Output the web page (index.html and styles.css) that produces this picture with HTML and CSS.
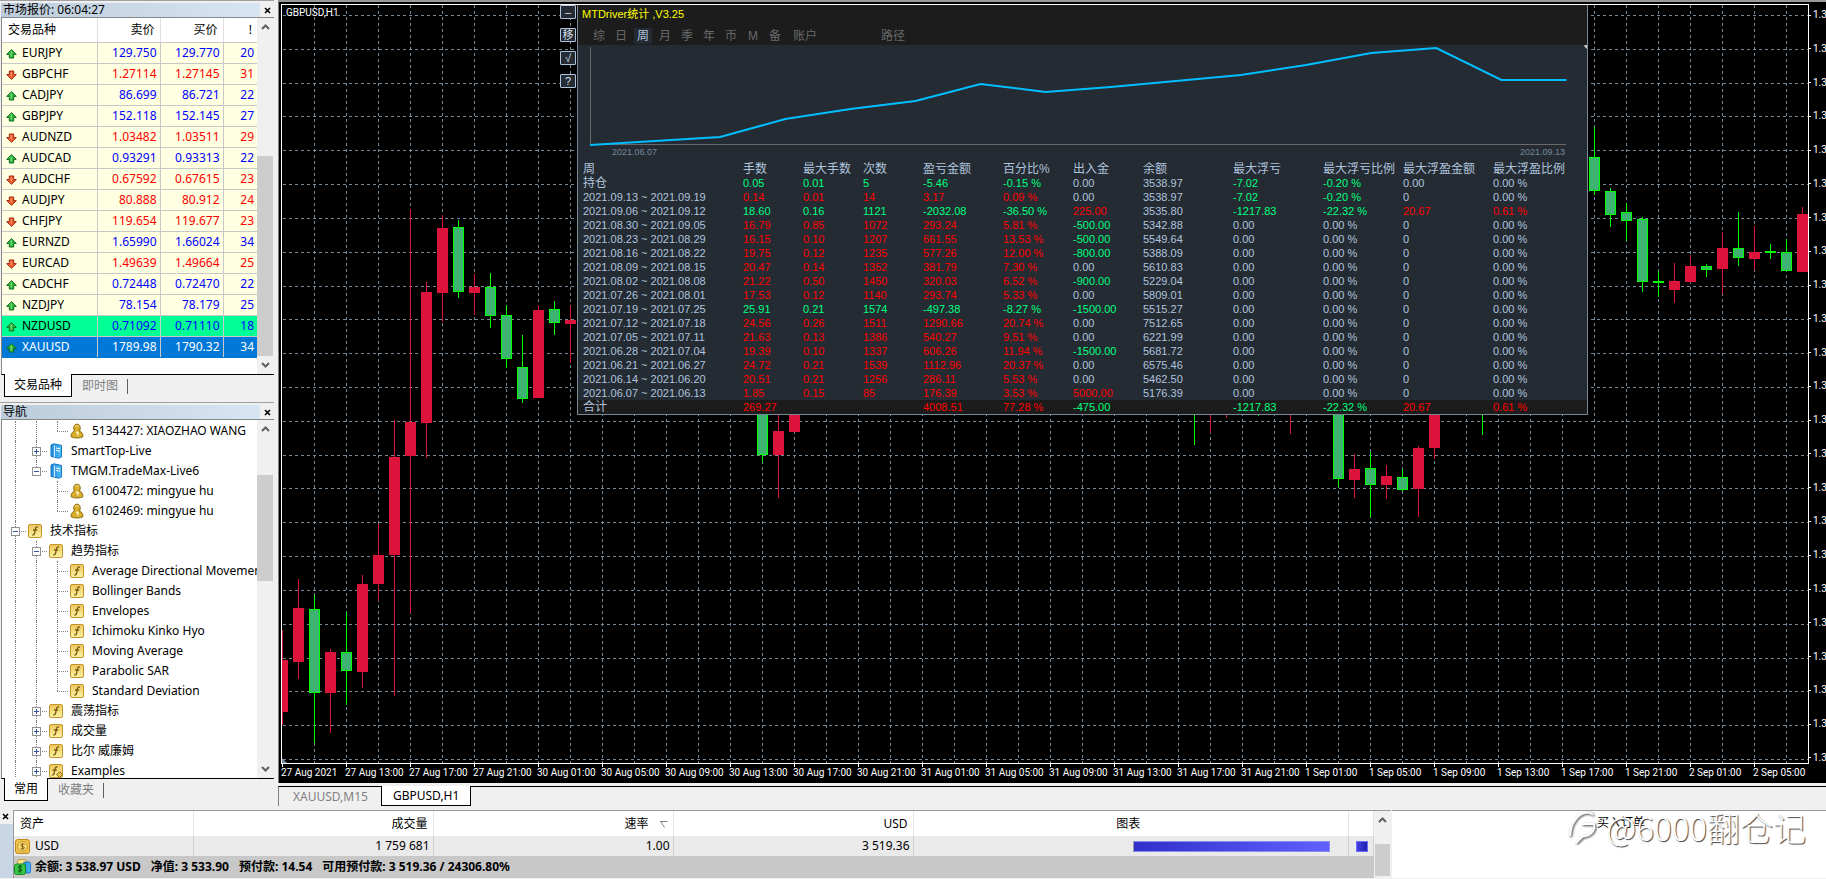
FILE: index.html
```html
<!DOCTYPE html>
<html lang="zh">
<head>
  <meta charset="UTF-8">
  <title>GBPUSD,H1</title>
  <link rel="stylesheet" href="styles.css">
</head>
<body>
  <svg class="sprite" aria-hidden="true">
    <defs>
      <linearGradient id="gold" x1="0" y1="0" x2="0" y2="1">
        <stop offset="0" stop-color="#ecc75a"/><stop offset="1" stop-color="#fdf3a6"/>
      </linearGradient>
      <linearGradient id="blue" x1="0" y1="0" x2="1" y2="0">
        <stop offset="0" stop-color="#1c86d8"/><stop offset="1" stop-color="#4fc0f8"/>
      </linearGradient>
    </defs>
    <symbol id="i-up" viewBox="0 0 11 10">
      <path d="M5.5 .7 10.3 5.4H7.7V9H3.3V5.4H.7Z" fill="#2fb53c" stroke="#10701c"/>
      <path d="M5.2 2.4V7.6" stroke="#8be88f"/>
    </symbol>
    <symbol id="i-down" viewBox="0 0 11 10">
      <path d="M5.5 9.3 .7 4.6H3.3V1H7.7V4.6H10.3Z" fill="#ee5a2c" stroke="#a32a0c"/>
      <path d="M5.2 2V6.6" stroke="#ffab80"/>
    </symbol>
    <symbol id="i-func" viewBox="0 0 14 14">
      <rect x=".5" y=".5" width="13" height="13" rx="1.5" fill="url(#gold)" stroke="#c4922a"/>
      <path d="M10 3.2C8.4 2.6 7.7 3.4 7.4 5L6.6 9C6.3 10.6 5.6 11.3 4.2 10.8M5 6H9.2" fill="none" stroke="#7c5a12" stroke-width="1.3"/>
    </symbol>
    <symbol id="i-custom" viewBox="0 0 14 14">
      <rect x=".5" y=".5" width="13" height="13" rx="1.5" fill="url(#gold)" stroke="#c4922a"/>
      <path d="M8.6 3.2C7 2.6 6.3 3.4 6 5L5.2 9C4.9 10.6 4.2 11.3 2.8 10.8M3.6 6H7.8" fill="none" stroke="#7c5a12" stroke-width="1.3"/>
      <path d="M10.6 7.6 13.6 10.6 10.6 13.6 7.6 10.6Z" fill="#e8c44c" stroke="#8c6a1c"/>
    </symbol>
    <symbol id="i-server" viewBox="0 0 14 16">
      <path d="M2 2 5 .8 12.5 2.4V14L9.6 15.2 2 13.4Z" fill="url(#blue)" stroke="#1a78c2"/>
      <path d="M5.4 2.4V14.2" stroke="#e6f6ff"/>
      <path d="M7 5 11 5.8M7 7.4 11 8.2" stroke="#fff"/>
    </symbol>
    <symbol id="i-user" viewBox="0 0 14 16">
      <path d="M1 13.6C1 10.6 2.6 8.6 4.6 8 2.8 5.4 3.6 1.2 7 1.2S11 5.4 9.4 8C11.6 8.8 13 10.8 13 13.6 11 15.4 3 15.4 1 13.6Z" fill="#d8ae2a" stroke="#8c6a10"/>
      <path d="M5.6 8.6 8.4 13.4 8.8 8.8Z" fill="#fff6c8"/>
      <path d="M5 3.4C6 2.6 8 2.6 9 3.6" fill="none" stroke="#f6e08a"/>
    </symbol>
    <symbol id="i-coin" viewBox="0 0 15 15">
      <rect x=".5" y=".5" width="14" height="14" rx="2.5" fill="#efc04a" stroke="#c08a1c"/>
      <circle cx="7.5" cy="7.5" r="4.8" fill="#f8dc78" stroke="#b98a22" stroke-width=".8"/>
      <path d="M9.6 5.6C8.6 4.6 5.8 4.8 5.8 6.3S9.4 7.2 9.4 8.8 6.4 10.4 5.4 9.3M7.5 4V11" fill="none" stroke="#85600e"/>
    </symbol>
    <symbol id="i-money" viewBox="0 0 17 16">
      <rect x="3.5" y=".6" width="9" height="6" rx="2" fill="#f8e48c" stroke="#c29c28"/>
      <rect x="9.5" y="3" width="7" height="11" rx="1.5" fill="url(#blue)" stroke="#1a78c2"/>
      <rect x=".5" y="5" width="11" height="10.4" rx="2" fill="#3cc648" stroke="#0f8a20"/>
      <path d="M8 7.6C7 6.8 4.4 6.8 4.4 8.4S7.8 9.4 7.8 11 5 12.6 3.8 11.6M6 6V13.8" fill="none" stroke="#064d10"/>
    </symbol>
    <symbol id="i-chev-up" viewBox="0 0 9 6"><path d="M1 5 4.5 1.5 8 5" fill="none" stroke="#606060" stroke-width="2"/></symbol>
    <symbol id="i-chev-down" viewBox="0 0 9 6"><path d="M1 1 4.5 4.5 8 1" fill="none" stroke="#606060" stroke-width="2"/></symbol>
    <symbol id="i-close" viewBox="0 0 7 7"><path d="M1 1 6 6M6 1 1 6" stroke="#000" stroke-width="1.6"/></symbol>
  </svg>

  <div class="app">
    <div class="workspace">
      <aside class="docks">
        <section class="dock market">
          <header class="dock-title">
            <h2>市场报价: 06:04:27</h2>
            <button class="close" aria-label="关闭市场报价"><svg><use href="#i-close"/></svg></button>
          </header>
          <div class="dock-body">
            <table class="quotes">
              <colgroup><col class="c-symbol"><col class="c-price"><col class="c-price"><col></colgroup>
              <thead><tr><th>交易品种</th><th>卖价</th><th>买价</th><th>!</th></tr></thead>
              <tbody id="quotes"></tbody>
            </table>
            <div class="scroll">
              <svg><use href="#i-chev-up"/></svg>
              <div class="track track-market"><i></i></div>
              <svg><use href="#i-chev-down"/></svg>
            </div>
          </div>
          <div class="tabs">
            <button class="tab active">交易品种</button>
            <button class="tab">即时图</button>
          </div>
        </section>

        <section class="dock navigator">
          <header class="dock-title">
            <h2>导航</h2>
            <button class="close" aria-label="关闭导航"><svg><use href="#i-close"/></svg></button>
          </header>
          <div class="dock-body">
            <ul class="tree" id="tree"></ul>
            <div class="scroll">
              <svg><use href="#i-chev-up"/></svg>
              <div class="track track-tree"><i></i></div>
              <svg><use href="#i-chev-down"/></svg>
            </div>
          </div>
          <div class="tabs">
            <button class="tab active">常用</button>
            <button class="tab">收藏夹</button>
          </div>
        </section>
      </aside>

      <main class="charts">
        <div class="chart">
          <div class="plot">
            <svg id="candles" class="candles"></svg>
            <div class="symbol-name">GBPUSD,H1</div>
            <div class="driver">
              <div class="tools">
                <button>–</button><button>移</button><button>√</button><button>?</button>
              </div>
              <div class="stats">
                <header>
                  <h1>MTDriver统计 ,V3.25</h1>
                  <nav>
                    <button>综</button><button>日</button><button class="on">周</button><button>月</button><button>季</button><button>年</button><button>币</button><button>M</button><button>备</button><button class="wide">账户</button><button class="path">路径</button>
                  </nav>
                </header>
                <div class="equity">
                  <svg id="equity" viewBox="0 0 1009 101"></svg>
                  <div class="range"><span>2021.06.07</span><span>2021.09.13</span></div>
                </div>
                <table>
                  <colgroup>
                    <col class="w160"><col class="w60"><col class="w60"><col class="w60"><col class="w80"><col class="w70">
                    <col class="w70"><col class="w90"><col class="w90"><col class="w80"><col class="w90"><col>
                  </colgroup>
                  <thead>
                    <tr><th>周</th><th>手数</th><th>最大手数</th><th>次数</th><th>盈亏金额</th><th>百分比%</th><th>出入金</th><th>余额</th><th>最大浮亏</th><th>最大浮亏比例</th><th>最大浮盈金额</th><th>最大浮盈比例</th></tr>
                  </thead>
                  <tbody id="weeks"></tbody>
                  <tfoot>
                    <tr><td class="total">合计</td><td class="r">269.27</td><td></td><td></td><td class="r">4008.51</td><td class="r">77.28 %</td><td class="g">-475.00</td><td></td><td class="g">-1217.83</td><td class="g">-22.32 %</td><td class="r">20.67</td><td class="r">0.61 %</td></tr>
                  </tfoot>
                </table>
              </div>
            </div>
          </div>
          <div class="prices" id="prices"></div>
          <div class="times" id="times"></div>
        </div>
        <div class="tabs chart-tabs">
          <button class="tab">XAUUSD,M15</button>
          <button class="tab active">GBPUSD,H1</button>
        </div>
      </main>
    </div>

    <section class="terminal">
      <div class="grip"><button class="close" aria-label="关闭终端"><svg><use href="#i-close"/></svg></button></div>
      <div class="exposure">
        <table>
          <colgroup><col class="e-asset"><col class="e-num"><col class="e-num"><col class="e-num"><col><col class="e-key"></colgroup>
          <thead>
            <tr><th>资产</th><th>成交量</th><th class="sorted">速率 <svg viewBox="0 0 8 7"><path d="M0 .5H7.5M1 1 4.5 6.5" fill="none" stroke="#808080"/></svg></th><th>USD</th><th>图表</th><th></th></tr>
          </thead>
          <tbody>
            <tr><td><svg><use href="#i-coin"/></svg>USD</td><td>1 759 681</td><td>1.00</td><td>3 519.36</td><td><div class="bar"></div></td><td><div class="key"></div></td></tr>
          </tbody>
        </table>
        <div class="summary">
          <svg><use href="#i-money"/></svg>
          <span>余额: 3 538.97 USD</span><span>净值: 3 533.90</span><span>预付款: 14.54</span><span>可用预付款: 3 519.36 / 24306.80%</span>
        </div>
      </div>
      <div class="scroll">
        <svg><use href="#i-chev-up"/></svg>
        <div class="track track-exposure"><i></i></div>
      </div>
      <div class="orders">
        <span>买入订单</span>
        <div class="watermark">
          <svg viewBox="0 0 38 34">
            <path d="M2 26C3 17 4 14 8 9C13 2 22 1 25 5M14 14H26C28 22 20 27 15 26L8 33" />
          </svg>
          @6000翻仓记
        </div>
      </div>
    </section>
  </div>
  <script src="script.js"></script>
</body>
</html>
```

FILE: styles.css
```css
* {
  box-sizing: border-box;
}
body {
  margin: 0;
  overflow: hidden;
  background: #f0f0f0;
  color: #000;
  font: 12px/20px "Noto Sans", "Noto Sans CJK SC", sans-serif;
}
button {
  margin: 0;
  padding: 0;
  border: 0;
  background: none;
  color: inherit;
  font: inherit;
}
table {
  border-collapse: collapse;
  table-layout: fixed;
  width: 100%;
}
th {
  font-weight: normal;
}
th, td {
  padding: 0;
  white-space: nowrap;
}
ul {
  margin: 0;
  padding: 0;
  list-style: none;
}
.sprite {
  position: absolute;
  width: 0;
  height: 0;
}
.app {
  display: grid;
  grid-template-rows: minmax(0, 1fr) auto;
  height: 100vh;
}
.workspace {
  display: grid;
  grid-template-columns: 278px minmax(0, 1fr);
  min-height: 0;
}

/* docked panels */
.docks {
  display: flex;
  flex-direction: column;
  min-height: 0;
  padding-right: 4px;
}
.dock {
  display: flex;
  flex-direction: column;
  border-top: 1px solid #a0a0a0;
  padding-top: 2px;
}
.market {
  height: 402px;
}
.navigator {
  flex: 1;
  min-height: 0;
}
.dock-title {
  display: flex;
  height: 14px;
  padding-left: 1px;
}
.dock-title h2 {
  flex: 1;
  margin: 0;
  padding-left: 2px;
  font-size: 12px;
  line-height: 14px;
  font-weight: normal;
  background: linear-gradient(90deg, #bccbda, #d8e5f3);
}
.close {
  display: flex;
  width: 14px;
  align-items: center;
  justify-content: center;
}
.close svg {
  width: 7px;
  height: 7px;
}
.dock-body {
  display: flex;
  flex: 1;
  min-height: 0;
  margin-left: 1px;
  border-top: 1px solid #888;
  border-left: 1px solid #888;
  border-bottom: 1px solid #000;
  background: #fff;
  overflow: hidden;
}
.scroll {
  display: flex;
  flex-direction: column;
  flex: none;
  width: 17px;
  align-items: center;
  background: #f0f0f0;
}
.scroll svg {
  flex: none;
  width: 9px;
  height: 6px;
  margin: 6px 0;
}
.track {
  flex: 1;
  align-self: stretch;
  padding-right: 1px;
}
.track i {
  display: block;
  height: 100%;
  background: #cdcdcd;
}
.track-market {
  padding-top: 120px;
}
.track-tree i {
  height: 106px;
}
.track-tree {
  padding-top: 37px;
}

.quotes {
  align-self: flex-start;
  flex: 1;
  width: auto;
  min-width: 0;
  line-height: 16px;
}
.c-symbol {
  width: 95px;
}
.c-price {
  width: 63px;
}
.quotes th {
  height: 24px;
  padding-right: 5px;
  border-right: 1px solid #e0e0e0;
  border-bottom: 1px solid #c8c8c8;
  text-align: right;
}
.quotes th:first-child {
  padding-left: 6px;
  text-align: left;
}
.quotes td {
  height: 21px;
  padding-right: 3px;
  border-right: 1px solid #c8c8c8;
  border-bottom: 1px solid #c8c8c8;
  background: #ffffe1;
  color: #00f;
  text-align: right;
}
.quotes td:first-child {
  padding-left: 4px;
  color: #000;
  text-align: left;
}
.quotes td:last-child, .quotes th:last-child {
  border-right: 0;
}
.quotes td svg {
  width: 11px;
  height: 10px;
  margin-right: 5px;
  vertical-align: -2px;
}
.quotes .down td + td {
  color: #f00;
}
.quotes .green td {
  background: #00ff94;
}
.quotes .selected td, .quotes .selected td:first-child {
  background: #0078d7;
  border-bottom-color: #0078d7;
  color: #fff;
}

.tabs {
  display: flex;
  height: 27px;
  padding-left: 4px;
  flex: none;
}
.tab {
  position: relative;
  height: 21px;
  padding: 0 10px;
  color: #808080;
  line-height: 20px;
}
.tab.active {
  top: -1px;
  height: 23px;
  padding: 0 9px;
  border: 1px solid #000;
  border-top: 0;
  background: #fff;
  color: #000;
}
.docks .tab:not(.active)::after {
  content: "";
  position: absolute;
  right: 0;
  top: 4px;
  height: 15px;
  border-right: 1px solid #606060;
}

.tree {
  flex: 1;
  min-width: 0;
  padding: 1px 0 0 3px;
  overflow: hidden;
  font-size: 12px;
}
.tree li {
  display: flex;
  align-items: center;
  height: 20px;
  white-space: nowrap;
}
.tree li svg {
  flex: none;
  width: 14px;
  height: 16px;
  margin: 0 8px 0 2px;
}
.guide {
  position: relative;
  flex: none;
  width: 21px;
  height: 20px;
}
.line::before, .tee::before, .elbow::before {
  content: "";
  position: absolute;
  left: 10px;
  top: 0;
  height: 20px;
  border-left: 1px dotted #808080;
}
.elbow::before {
  height: 10px;
}
.tee::after, .elbow::after {
  content: "";
  position: absolute;
  left: 10px;
  top: 10px;
  width: 11px;
  border-top: 1px dotted #808080;
}
.toggle {
  position: absolute;
  z-index: 1;
  left: 6px;
  top: 6px;
  width: 9px;
  height: 9px;
  border: 1px solid #909090;
  background: linear-gradient(#3454a0, #3454a0) 1px 3px / 5px 1px no-repeat #fff;
}
.toggle.plus::after {
  content: "";
  position: absolute;
  left: 3px;
  top: 1px;
  height: 5px;
  border-left: 1px solid #3454a0;
}

/* chart window */
.charts {
  display: flex;
  flex-direction: column;
  min-width: 0;
  min-height: 0;
}
.chart {
  display: grid;
  grid-template-columns: minmax(0, 1fr) 17px;
  grid-template-rows: minmax(0, 1fr) 19px;
  flex: 1;
  min-height: 0;
  padding: 2px 0 0 2px;
  border-top: 2px solid #999;
  border-left: 1px solid #808080;
  background: #000;
  color: #fff;
  font-family: Roboto, "Noto Sans CJK SC", sans-serif;
  font-size: 10px;
}
.plot {
  position: relative;
  border: 1px solid #fff;
  overflow: hidden;
}
.candles {
  display: block;
  width: 100%;
  height: 100%;
}
.symbol-name {
  position: absolute;
  left: 4px;
  top: 1px;
  font-size: 10px;
  line-height: 14px;
}
.prices {
  display: flex;
  flex-direction: column;
  justify-content: space-between;
  padding-top: 5px;
  line-height: 12px;
}
.prices span {
  display: flex;
  align-items: center;
  gap: 2px;
}
.prices span::before {
  content: "";
  flex: none;
  width: 2px;
  height: 1px;
  background: #fff;
}
.times {
  grid-column: 1 / -1;
  display: flex;
  line-height: 18px;
}
.times span {
  position: relative;
  flex: none;
  width: 64px;
  white-space: nowrap;
}
.times span::before {
  content: "";
  position: absolute;
  left: 1px;
  top: 0;
  height: 3px;
  border-left: 1px solid #fff;
}
.chart-tabs {
  height: 20px;
  margin-top: 3px;
  border-top: 1px solid #000;
  border-left: 1px solid #808080;
}
.chart-tabs .tab {
  height: 19px;
  padding: 0 13px 0 10px;
  line-height: 18px;
}
.chart-tabs .tab.active {
  height: 20px;
  padding: 0 11px;
}

/* statistics overlay */
.driver {
  position: absolute;
  left: 278px;
  top: 0;
  display: flex;
  gap: 1px;
  font-family: "Liberation Sans", "Noto Sans CJK SC", sans-serif;
}
.tools {
  display: flex;
  flex-direction: column;
  gap: 9px;
}
.tools button {
  width: 16px;
  height: 14px;
  border: 1px solid #b0c4de;
  border-radius: 1px;
  background: #242b33;
  color: #d8e0ea;
  font-size: 11px;
  line-height: 11px;
}
.stats {
  width: 1011px;
  border: 1px solid #778899;
  border-top: 0;
  background: #242b33;
  color: #b0c4de;
  font-size: 11px;
}
.stats header {
  height: 40px;
  padding-top: 2px;
  background: #1c1c1c;
}
.stats h1 {
  margin: 0 0 7px 4px;
  color: #ff0;
  font-size: 11px;
  font-weight: normal;
  line-height: 14px;
}
.stats nav {
  display: flex;
  gap: 4px;
  padding-left: 12px;
}
.stats nav button {
  width: 18px;
  height: 16px;
  border-radius: 2px;
  color: #696969;
  font-size: 12px;
  line-height: 16px;
}
.stats nav .on {
  background: #242b33;
  color: #b0c4de;
}
.stats nav .wide {
  width: 34px;
}
.stats nav .path {
  width: 34px;
  margin-left: 50px;
}
.equity svg {
  display: block;
  width: 100%;
}
.range {
  display: flex;
  justify-content: space-between;
  padding: 0 22px 0 34px;
  color: #778899;
  font-size: 9px;
  line-height: 12px;
}
.stats table {
  margin-top: 4px;
  line-height: 14px;
}
.stats th, .stats td {
  height: 14px;
  text-align: left;
}
.stats th, .stats .total {
  font-size: 12px;
}
.stats th:first-child, .stats td:first-child {
  padding-left: 5px;
}
.stats tfoot {
  background: #1c1c1c;
}
.w60 { width: 60px; }
.w70 { width: 70px; }
.w80 { width: 80px; }
.w90 { width: 90px; }
.w160 { width: 165px; }
.r { color: #f00; }
.g { color: #00ff7f; }

/* terminal */
.terminal {
  display: grid;
  grid-template-columns: 13px minmax(0, 1361px) 18px minmax(200px, 1fr);
  margin-top: 4px;
  padding-bottom: 1px;
}
.grip {
  padding-top: 2px;
  background: linear-gradient(#f0f0f0 14px, #c8d6e6 14px);
}
.grip .close {
  width: 11px;
  height: 8px;
}
.exposure, .terminal .scroll, .orders {
  border-top: 1px solid #999;
}
.exposure {
  border-left: 1px solid #999;
  background: #fff;
}
.e-asset { width: 179px; }
.e-num { width: 240px; }
.e-key { width: 25px; }
.exposure th, .exposure td {
  border-right: 1px solid #d0d0d0;
  text-align: right;
}
.exposure th {
  height: 25px;
  padding-right: 5px;
  border-color: #e4e4e4;
}
.exposure td {
  height: 20px;
  padding-right: 3px;
  background: #eaeaea;
}
.exposure th:first-child, .exposure td:first-child {
  text-align: left;
}
.exposure th:first-child {
  padding-left: 6px;
}
.exposure td:first-child {
  padding-left: 1px;
}
.exposure th:nth-child(5) {
  text-align: center;
}
.sorted svg {
  width: 8px;
  height: 7px;
  margin-left: 8px;
}
.exposure td svg {
  width: 15px;
  height: 15px;
  margin-right: 5px;
  vertical-align: -4px;
}
.exposure td:nth-child(5) {
  padding: 0 18px 0 219px;
}
.bar {
  height: 11px;
  border: 1px solid #8c8cf0;
  border-left-color: #a0a0a0;
  background: linear-gradient(90deg, #3030c8, #6060ff);
}
.exposure td:last-child {
  padding: 0 5px 0 7px;
}
.key {
  height: 11px;
  border: 1px solid #6c6cf8;
  background: linear-gradient(90deg, #4040e0, #2020b0);
}
.summary {
  display: flex;
  align-items: center;
  gap: 10px;
  height: 22px;
  background: #c8c8c8;
  font-weight: bold;
  white-space: nowrap;
}
.summary svg {
  width: 17px;
  height: 16px;
  margin-right: -6px;
}
.track-exposure {
  padding: 15px 1px 2px;
}
.orders {
  position: relative;
  background: #fff;
  line-height: 24px;
  text-align: center;
}
.orders > span {
  margin-right: -24px;
}
.watermark {
  position: absolute;
  right: 20px;
  top: -4px;
  display: flex;
  align-items: center;
  color: #fff;
  font: 33px/40px "Noto Sans CJK SC", sans-serif;
  font-weight: 300;
  text-shadow: 1px 1px 1px #444;
}
.watermark svg {
  width: 38px;
  height: 34px;
  fill: none;
  stroke: #fff;
  stroke-width: 2;
  filter: drop-shadow(1px 1px 1px #333);
}
```

FILE: script.js
```javascript
const quotes = [
  ["EURJPY", "129.750", "129.770", 20, "up"],
  ["GBPCHF", "1.27114", "1.27145", 31, "down"],
  ["CADJPY", "86.699", "86.721", 22, "up"],
  ["GBPJPY", "152.118", "152.145", 27, "up"],
  ["AUDNZD", "1.03482", "1.03511", 29, "down"],
  ["AUDCAD", "0.93291", "0.93313", 22, "up"],
  ["AUDCHF", "0.67592", "0.67615", 23, "down"],
  ["AUDJPY", "80.888", "80.912", 24, "down"],
  ["CHFJPY", "119.654", "119.677", 23, "down"],
  ["EURNZD", "1.65990", "1.66024", 34, "up"],
  ["EURCAD", "1.49639", "1.49664", 25, "down"],
  ["CADCHF", "0.72448", "0.72470", 22, "up"],
  ["NZDJPY", "78.154", "78.179", 25, "up"],
  ["NZDUSD", "0.71092", "0.71110", 18, "up", "green"],
  ["XAUUSD", "1789.98", "1790.32", 34, "up", "selected"]
];
document.getElementById("quotes").innerHTML = quotes.map(([name, bid, ask, spread, dir, mark]) =>
  `<tr class="${dir} ${mark || ""}"><td><svg><use href="#i-${dir}"/></svg>${name}</td><td>${bid}</td><td>${ask}</td><td>${spread}</td></tr>`
).join("");

// guides: | line, t tee, l elbow, + - toggles, _ toggle on the last branch, blank
const tree = [
  ["||l", "user", "5134427: XIAOZHAO WANG"],
  ["|+", "server", "SmartTop-Live"],
  ["|_", "server", "TMGM.TradeMax-Live6"],
  ["| t", "user", "6100472: mingyue hu"],
  ["| l", "user", "6102469: mingyue hu"],
  ["-", "func", "技术指标"],
  ["|-", "func", "趋势指标"],
  ["||t", "func", "Average Directional Movement Index"],
  ["||t", "func", "Bollinger Bands"],
  ["||t", "func", "Envelopes"],
  ["||t", "func", "Ichimoku Kinko Hyo"],
  ["||t", "func", "Moving Average"],
  ["||t", "func", "Parabolic SAR"],
  ["||l", "func", "Standard Deviation"],
  ["|+", "func", "震荡指标"],
  ["|+", "func", "成交量"],
  ["|+", "func", "比尔 威廉姆"],
  ["|+", "custom", "Examples"]
];
const guides = {
  "|": '<span class="guide line"></span>',
  "t": '<span class="guide tee"></span>',
  "l": '<span class="guide elbow"></span>',
  " ": '<span class="guide"></span>',
  "+": '<span class="guide tee"><i class="toggle plus"></i></span>',
  "-": '<span class="guide tee"><i class="toggle"></i></span>',
  "_": '<span class="guide elbow"><i class="toggle"></i></span>'
};
document.getElementById("tree").innerHTML = tree.map(([g, icon, text]) =>
  `<li>${[...g].map(c => guides[c]).join("")}<svg><use href="#i-${icon}"/></svg>${text}</li>`
).join("");

const weeks = [
  "持仓|0.05|0.01|5|-5.46|-0.15 %|0.00|3538.97|-7.02|-0.20 %|0.00|0.00 %",
  "2021.09.13 ~ 2021.09.19|0.14|0.01|14|3.17|0.09 %|0.00|3538.97|-7.02|-0.20 %|0|0.00 %",
  "2021.09.06 ~ 2021.09.12|18.60|0.16|1121|-2032.08|-36.50 %|225.00|3535.80|-1217.83|-22.32 %|20.67|0.61 %",
  "2021.08.30 ~ 2021.09.05|16.79|0.85|1072|293.24|5.81 %|-500.00|5342.88|0.00|0.00 %|0|0.00 %",
  "2021.08.23 ~ 2021.08.29|16.15|0.10|1207|661.55|13.53 %|-500.00|5549.64|0.00|0.00 %|0|0.00 %",
  "2021.08.16 ~ 2021.08.22|19.75|0.12|1235|577.26|12.00 %|-800.00|5388.09|0.00|0.00 %|0|0.00 %",
  "2021.08.09 ~ 2021.08.15|20.47|0.14|1352|381.79|7.30 %|0.00|5610.83|0.00|0.00 %|0|0.00 %",
  "2021.08.02 ~ 2021.08.08|21.22|0.50|1450|320.03|6.52 %|-900.00|5229.04|0.00|0.00 %|0|0.00 %",
  "2021.07.26 ~ 2021.08.01|17.53|0.12|1140|293.74|5.33 %|0.00|5809.01|0.00|0.00 %|0|0.00 %",
  "2021.07.19 ~ 2021.07.25|25.91|0.21|1574|-497.38|-8.27 %|-1500.00|5515.27|0.00|0.00 %|0|0.00 %",
  "2021.07.12 ~ 2021.07.18|24.56|0.26|1511|1290.66|20.74 %|0.00|7512.65|0.00|0.00 %|0|0.00 %",
  "2021.07.05 ~ 2021.07.11|21.63|0.13|1386|540.27|9.51 %|0.00|6221.99|0.00|0.00 %|0|0.00 %",
  "2021.06.28 ~ 2021.07.04|19.39|0.10|1337|606.26|11.94 %|-1500.00|5681.72|0.00|0.00 %|0|0.00 %",
  "2021.06.21 ~ 2021.06.27|24.72|0.21|1539|1112.96|20.37 %|0.00|6575.46|0.00|0.00 %|0|0.00 %",
  "2021.06.14 ~ 2021.06.20|20.51|0.21|1256|286.11|5.53 %|0.00|5462.50|0.00|0.00 %|0|0.00 %",
  "2021.06.07 ~ 2021.06.13|1.85|0.15|85|176.39|3.53 %|5000.00|5176.39|0.00|0.00 %|0|0.00 %"
];
const sign = v => parseFloat(v) < 0 ? "g" : parseFloat(v) > 0 ? "r" : "";
document.getElementById("weeks").innerHTML = weeks.map(row => {
  const cells = row.split("|");
  return "<tr>" + cells.map((v, i) => {
    let cls = "";
    if (i === 0) cls = v === "持仓" ? "total" : "";
    else if (i <= 5) cls = sign(cells[4]);
    else if (i !== 7) cls = sign(v);
    return `<td class="${cls}">${v}</td>`;
  }).join("") + "</tr>";
}).join("");

// equity curve
const equity = [100, 96, 92, 74, 64, 56, 39, 47, 42, 36, 30, 20, 8, 3, 35, 35];
const points = equity.map((y, i) => `${12 + i * 65.1},${y}`).join(" ");
document.getElementById("equity").innerHTML =
  `<path d="M12.5 2V99.5H988" fill="none" stroke="#696969"/>
   <polyline points="${points}" fill="none" stroke="#00bfff" stroke-width="2"/>
   <path d="M1009 -3V4L1006 1Z" fill="#ccc"/>`;

// candles: bar index, high, body top, body bottom, low, r = up / g = down
const bars = [
  [0, 630, 660, 712, 725, "r"], [1, 579, 608, 662, 679, "r"], [2, 595, 609, 693, 743, "g"],
  [3, 649, 652, 693, 733, "r"], [4, 612, 652, 671, 705, "g"], [5, 575, 584, 672, 688, "r"],
  [6, 524, 555, 584, 601, "r"], [7, 420, 457, 555, 696, "r"], [8, 209, 422, 456, 613, "r"],
  [9, 282, 292, 423, 458, "r"], [10, 215, 228, 293, 322, "r"], [11, 220, 227, 292, 298, "g"],
  [12, 274, 287, 293, 315, "r"], [13, 273, 287, 316, 328, "g"], [14, 305, 315, 359, 368, "g"],
  [15, 335, 367, 399, 403, "g"], [16, 305, 310, 398, 398, "r"], [17, 301, 309, 323, 335, "g"],
  [18, 306, 320, 324, 363, "r"], [30, 400, 400, 455, 462, "g"], [31, 400, 431, 455, 498, "r"],
  [32, 400, 400, 432, 432, "r"], [57, 400, 400, 400, 445, "g"], [58, 400, 400, 400, 433, "r"],
  [59, 400, 400, 400, 418, "r"], [61, 400, 400, 400, 416, "g"], [63, 400, 400, 400, 434, "r"],
  [66, 400, 400, 479, 487, "g"], [67, 454, 469, 480, 498, "r"], [68, 452, 468, 485, 517, "g"],
  [69, 465, 476, 485, 499, "r"], [70, 469, 477, 490, 492, "g"], [71, 446, 448, 489, 517, "r"],
  [72, 400, 400, 448, 459, "r"], [75, 400, 400, 400, 435, "g"], [82, 127, 157, 191, 195, "g"],
  [83, 188, 191, 215, 227, "g"], [84, 203, 212, 221, 241, "g"], [85, 217, 219, 282, 292, "g"],
  [86, 271, 281, 283, 297, "g"], [87, 263, 281, 290, 303, "r"], [88, 255, 266, 282, 283, "r"],
  [89, 264, 266, 270, 277, "g"], [90, 232, 248, 269, 294, "r"], [91, 212, 248, 258, 266, "g"],
  [92, 226, 252, 259, 270, "r"], [93, 244, 251, 253, 259, "g"], [94, 239, 252, 271, 271, "g"],
  [95, 207, 214, 272, 272, "r"]
];
const TOP = 5;
let svg = '<g stroke="#778899" stroke-dasharray="3 3" shape-rendering="crispEdges">';
for (let i = 0; i < 23; i++) {
  const y = Math.round(15 + i * 33.82) - TOP + 0.5;
  svg += `<line x1="1" y1="${y}" x2="100%" y2="${y}"/>`;
}
for (let x = 32; x < 4000; x += 32) {
  svg += `<line x1="${x + 0.5}" y1="0" x2="${x + 0.5}" y2="100%"/>`;
}
svg += '</g><g shape-rendering="crispEdges">';
for (const [i, high, top, bottom, low, kind] of bars) {
  const x = i * 16;
  const color = kind === "r" ? "#dc143c" : "#00ff00";
  svg += `<rect x="${x}" y="${high - TOP}" width="1" height="${low - high}" fill="${color}"/>`;
  svg += `<rect x="${x - 5}" y="${top - TOP}" width="11" height="${bottom - top}" fill="${color}"/>`;
  if (kind === "g" && bottom - top > 2) {
    svg += `<rect x="${x - 4}" y="${top - TOP + 1}" width="9" height="${bottom - top - 2}" fill="#3cb371"/>`;
  }
}
svg += '</g><path d="M0 753V758H5Z" fill="#778899"/>';
document.getElementById("candles").innerHTML = svg;

document.getElementById("prices").innerHTML = "<span>1.3</span>".repeat(23);

const times = ["27 Aug 2021", "27 Aug 13:00", "27 Aug 17:00", "27 Aug 21:00"];
for (const day of ["30 Aug", "31 Aug", "1 Sep", "2 Sep"]) {
  for (const hour of ["01", "05", "09", "13", "17", "21"]) {
    if (day === "2 Sep" && hour > "05") break;
    times.push(`${day} ${hour}:00`);
  }
}
document.getElementById("times").innerHTML = times.map(t => `<span>${t}</span>`).join("");
```
